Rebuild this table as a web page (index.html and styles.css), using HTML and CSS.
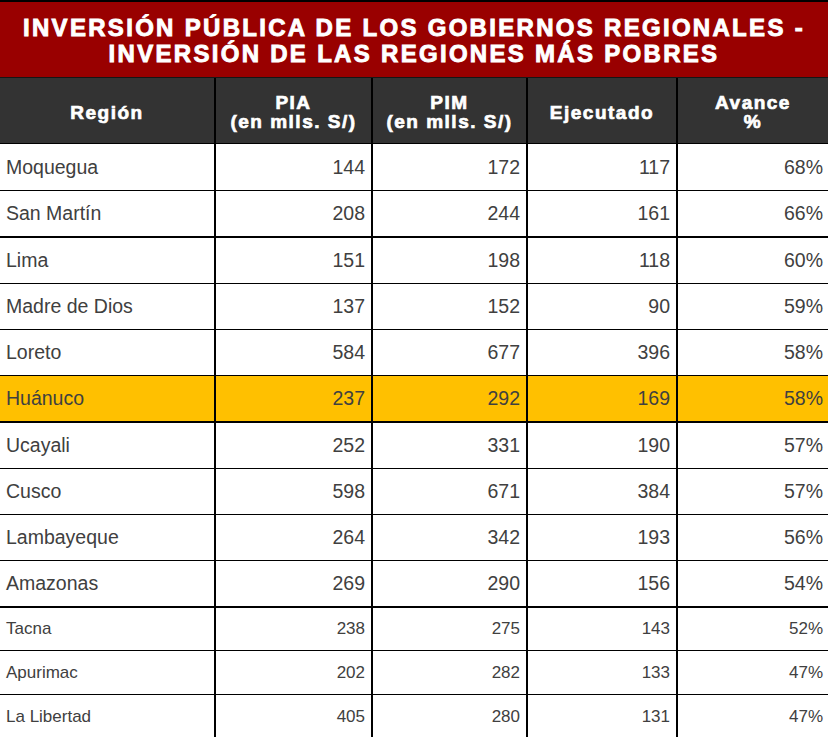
FILE: index.html
```html
<!DOCTYPE html>
<html lang="es">
<head>
<meta charset="utf-8">
<title>Inversión pública de los gobiernos regionales</title>
<link rel="stylesheet" href="styles.css">
</head>
<body>
<div class="sheet">
  <div class="title">INVERSIÓN PÚBLICA DE LOS GOBIERNOS REGIONALES -<br>INVERSIÓN DE LAS REGIONES MÁS POBRES</div>
  <div class="row head">
    <div class="cell">Región</div>
    <div class="cell">PIA<br>(en mlls. S/)</div>
    <div class="cell">PIM<br>(en mlls. S/)</div>
    <div class="cell">Ejecutado</div>
    <div class="cell last">Avance<br>%</div>
  </div>
  <div class="row first"><div class="cell name">Moquegua</div><div class="cell num">144</div><div class="cell num">172</div><div class="cell num">117</div><div class="cell num last">68%</div></div>
  <div class="row thick"><div class="cell name">San Martín</div><div class="cell num">208</div><div class="cell num">244</div><div class="cell num">161</div><div class="cell num last">66%</div></div>
  <div class="row"><div class="cell name">Lima</div><div class="cell num">151</div><div class="cell num">198</div><div class="cell num">118</div><div class="cell num last">60%</div></div>
  <div class="row"><div class="cell name">Madre de Dios</div><div class="cell num">137</div><div class="cell num">152</div><div class="cell num">90</div><div class="cell num last">59%</div></div>
  <div class="row"><div class="cell name">Loreto</div><div class="cell num">584</div><div class="cell num">677</div><div class="cell num">396</div><div class="cell num last">58%</div></div>
  <div class="row thick hl"><div class="cell name">Huánuco</div><div class="cell num">237</div><div class="cell num">292</div><div class="cell num">169</div><div class="cell num last">58%</div></div>
  <div class="row"><div class="cell name">Ucayali</div><div class="cell num">252</div><div class="cell num">331</div><div class="cell num">190</div><div class="cell num last">57%</div></div>
  <div class="row"><div class="cell name">Cusco</div><div class="cell num">598</div><div class="cell num">671</div><div class="cell num">384</div><div class="cell num last">57%</div></div>
  <div class="row"><div class="cell name">Lambayeque</div><div class="cell num">264</div><div class="cell num">342</div><div class="cell num">193</div><div class="cell num last">56%</div></div>
  <div class="row thick"><div class="cell name">Amazonas</div><div class="cell num">269</div><div class="cell num">290</div><div class="cell num">156</div><div class="cell num last">54%</div></div>
  <div class="row small tight"><div class="cell name">Tacna</div><div class="cell num">238</div><div class="cell num">275</div><div class="cell num">143</div><div class="cell num last">52%</div></div>
  <div class="row small"><div class="cell name">Apurimac</div><div class="cell num">202</div><div class="cell num">282</div><div class="cell num">133</div><div class="cell num last">47%</div></div>
  <div class="row small"><div class="cell name">La Libertad</div><div class="cell num">405</div><div class="cell num">280</div><div class="cell num">131</div><div class="cell num last">47%</div></div>
</div>
</body>
</html>
```
FILE: styles.css
```css
html, body {
  margin: 0;
  padding: 0;
  background: #ffffff;
}

.sheet {
  width: 828px;
  font-family: "Liberation Sans", Arial, sans-serif;
  color: #404040;
  overflow: hidden;
}

.title {
  background: #990000;
  border-top: 2px solid #000000;
  border-bottom: 1px solid #161616;
  padding: 13px 0 10px;
  height: 52px;
  color: #ffffff;
  font-weight: bold;
  font-size: 24px;
  line-height: 26px;
  letter-spacing: 2.3px;
  text-align: center;
  -webkit-text-stroke: 0.9px #ffffff;
}

.row {
  display: grid;
  grid-template-columns: 216px 157px 155px 150px 150px;
  box-sizing: border-box;
  height: 46px;
  border-bottom: 1px solid #000000;
  font-size: 19.5px;
}

.row.first { height: 47px; }
.row.thick { height: 47px; border-bottom-width: 2px; }
.row.hl { background: #ffc000; }
.row.small { height: 44px; font-size: 17px; }
.row.small.tight { height: 43px; }

.cell {
  display: flex;
  align-items: center;
  padding: 0 6px;
  border-right: 2px solid #000000;
  white-space: nowrap;
}

.cell.last { border-right: 0; }

.cell.num { justify-content: flex-end; }
.cell.num.last { padding-right: 5px; }

.row.head {
  height: 66px;
  background: #333333;
  color: #ffffff;
  font-weight: bold;
  font-size: 19px;
  line-height: 19px;
  letter-spacing: 1.5px;
  -webkit-text-stroke: 0.7px #ffffff;
}

.row.head .cell {
  justify-content: center;
  text-align: center;
  padding-top: 3px;
}
```
